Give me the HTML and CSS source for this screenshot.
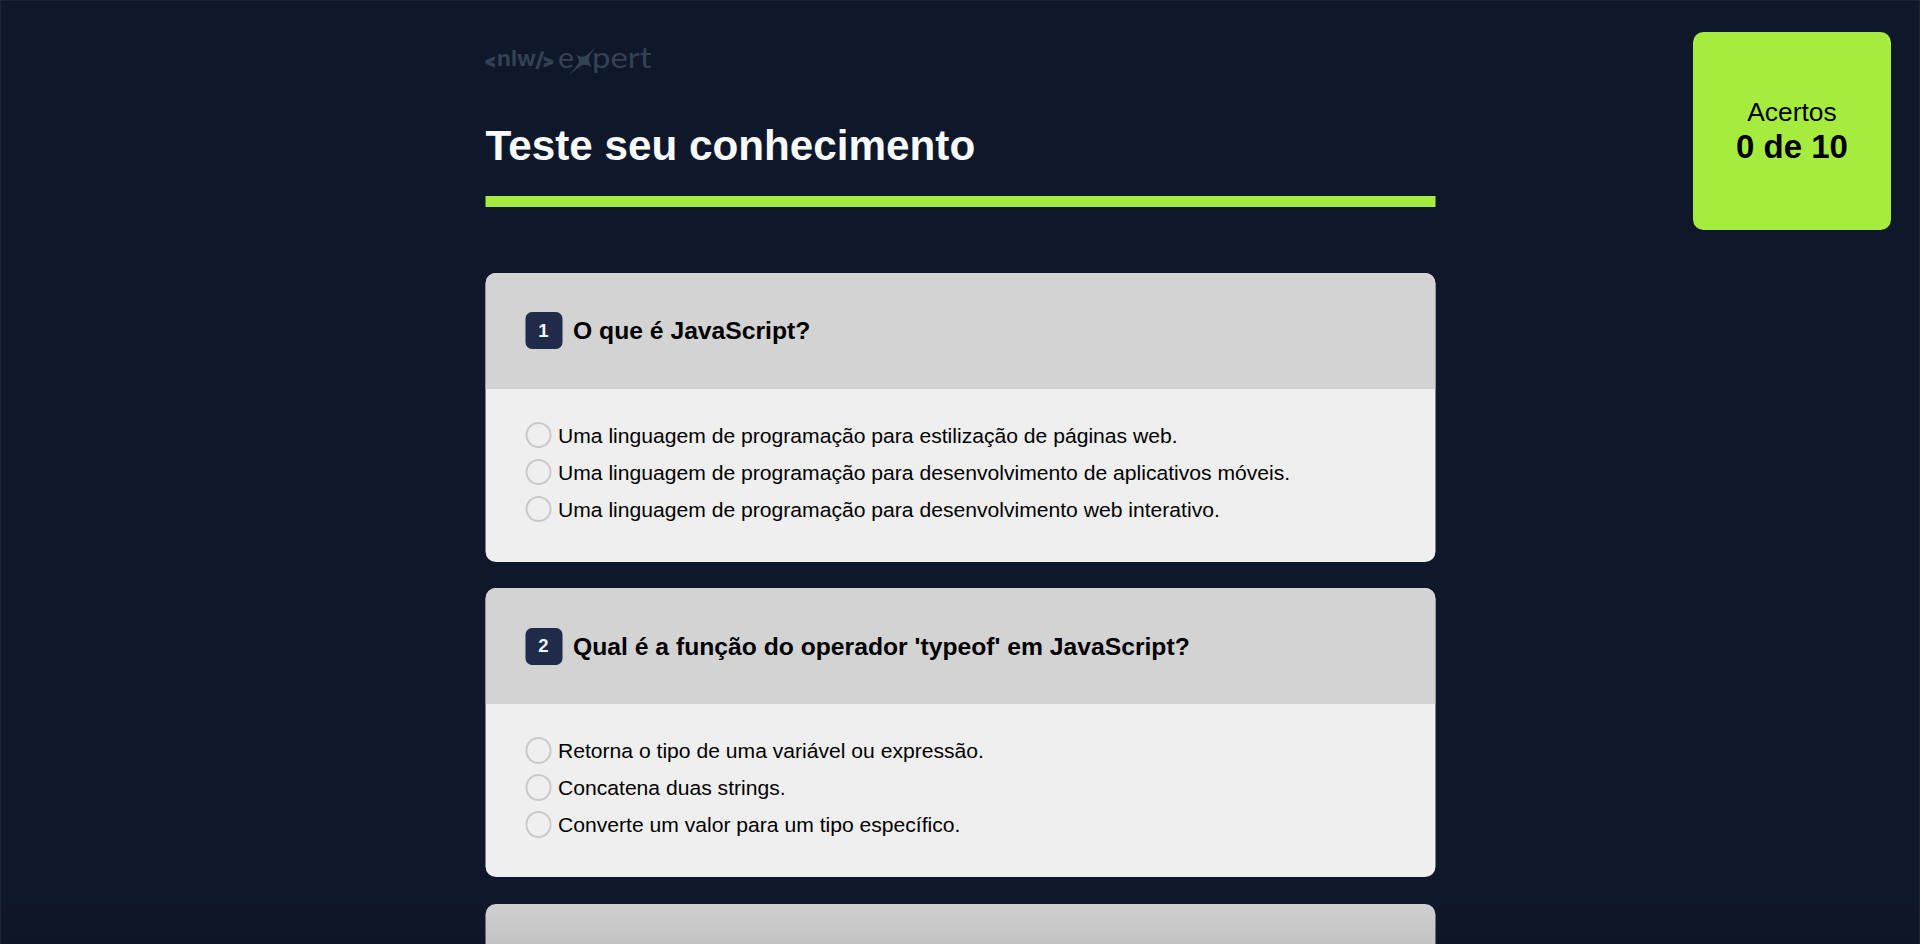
FILE: index.html
```
<!DOCTYPE html>
<html lang="pt-BR">
<head>
<meta charset="UTF-8">
<title>Teste seu conhecimento</title>
<link rel="stylesheet" href="styles.css">
</head>
<body>
<main class="quiz">
  <svg class="logo" viewBox="0 0 168 36" role="img" aria-label="nlw expert">
    <g class="logo-bold">
      <text class="logo-sign" x="-1" y="23.500" font-size="17" textLength="11.500" lengthAdjust="spacingAndGlyphs">&lt;</text>
      <text x="11.500" y="23" font-size="21" textLength="39" lengthAdjust="spacingAndGlyphs">nlw</text>
      <text x="49.500" y="23.500" font-size="20" textLength="9.500" lengthAdjust="spacingAndGlyphs">/</text>
      <text class="logo-sign" x="57" y="23.500" font-size="17" textLength="11.500" lengthAdjust="spacingAndGlyphs">&gt;</text>
    </g>
    <g class="logo-light">
      <text x="72.500" y="24.500" font-size="29" textLength="16" lengthAdjust="spacingAndGlyphs">e</text>
      <text x="106.500" y="24.500" font-size="29" textLength="59.500" lengthAdjust="spacingAndGlyphs">pert</text>
    </g>
    <path class="logo-star" d="M113 0.800 C107.500 7 104.500 11.500 103.300 15.500 C103.300 18.500 104.500 21 106 23.800 C103 22 100 21.300 97.500 21.800 C93 24 88.500 28 83 33 C88 27 92 22.500 93.500 18.800 C93.500 16.500 92.500 14 90.300 11.300 C93 13 96 14 98.800 13.500 C103.500 11 108 6.500 113 0.800 Z"/>
  </svg>
  <h1 class="title">Teste seu conhecimento</h1>
  <div class="rule"></div>
  <div class="cards">
    <section class="card">
      <header class="card-head"><span class="num">1</span><h2 class="question">O que é JavaScript?</h2></header>
      <div class="options">
        <label class="option"><span class="radio"></span><span class="answer">Uma linguagem de programação para estilização de páginas web.</span></label>
        <label class="option"><span class="radio"></span><span class="answer">Uma linguagem de programação para desenvolvimento de aplicativos móveis.</span></label>
        <label class="option"><span class="radio"></span><span class="answer">Uma linguagem de programação para desenvolvimento web interativo.</span></label>
      </div>
    </section>
    <section class="card">
      <header class="card-head"><span class="num">2</span><h2 class="question">Qual é a função do operador 'typeof' em JavaScript?</h2></header>
      <div class="options">
        <label class="option"><span class="radio"></span><span class="answer">Retorna o tipo de uma variável ou expressão.</span></label>
        <label class="option"><span class="radio"></span><span class="answer">Concatena duas strings.</span></label>
        <label class="option"><span class="radio"></span><span class="answer">Converte um valor para um tipo específico.</span></label>
      </div>
    </section>
    <section class="card card-cut"></section>
  </div>
</main>
<aside class="score">
  <span class="score-label">Acertos</span>
  <strong class="score-value">0 de 10</strong>
</aside>
<div class="shade"></div>
</body>
</html>
```
FILE: styles.css
```
* { box-sizing: border-box; }
html { height: 100%; overflow: hidden; }
body {
  margin: 0;
  height: 944px;
  overflow: hidden;
  background: #0f172a;
  border: 1px solid #1b2537;
  border-bottom: 0;
  font-family: "Liberation Sans", Arial, sans-serif;
  color: #000;
}
.quiz {
  display: flex;
  flex-direction: column;
  width: 950px;
  height: 943px;
  margin: 0 auto;
  padding-top: 42px;
  transform: translateX(0.5px);
}
.logo { display: block; flex: none; width: 168px; height: 36px; overflow: visible; fill: #334155; }
.logo-bold { font-family: Inter, sans-serif; font-weight: 700; }
.logo-sign { font-weight: 900; stroke: #334155; stroke-width: 0.6px; }
.logo-light { font-family: Lato, sans-serif; font-weight: 400; }
.title {
  margin: 42px 0 0;
  font-size: 42.24px;
  line-height: 49px;
  color: #f8fafc;
  white-space: nowrap;
}
.rule { flex: none; height: 10.5px; margin-top: 26px; background: #a6ec3f; }
.cards { display: flex; flex: 1; flex-direction: column; gap: 26.5px; min-height: 0; margin-top: 66px; }
.card { flex: none; border-radius: 10.5px; overflow: hidden; background: #efefef; }
.card-cut { flex: 1; border-radius: 10.5px 10.5px 0 0; background: #d3d3d3; }
.card-head {
  display: flex;
  align-items: center;
  gap: 11px;
  height: 116px;
  padding: 0 39.5px;
  background: #d3d3d3;
}
.num {
  display: flex;
  align-items: center;
  justify-content: center;
  width: 37px;
  height: 37px;
  border-radius: 6.5px;
  background: #202b49;
  color: #f1f5f9;
  font-size: 18.5px;
  font-weight: 700;
}
.question { margin: 0; padding-top: 1px; font-size: 24.7px; line-height: 30px; white-space: nowrap; }
.options { height: 173px; padding: 28px 39.5px 0; }
.option {
  display: flex;
  align-items: center;
  gap: 6.5px;
  height: 37px;
  font-size: 21.12px;
  white-space: nowrap;
}
.answer { padding-top: 1.5px; }
.radio { width: 26.5px; height: 26.5px; border: 2px solid #cacaca; border-radius: 50%; }
.score {
  position: absolute;
  top: 31.5px;
  right: 29px;
  display: flex;
  flex-direction: column;
  align-items: center;
  justify-content: center;
  width: 198px;
  height: 198px;
  padding-top: 2px;
  border-radius: 10.5px;
  background: #a6ec3f;
}
.score-label { font-size: 26.4px; line-height: 30px; }
.score-value { font-size: 33px; line-height: 40px; margin-bottom: -1px; }
.shade {
  position: absolute;
  left: 0;
  right: 0;
  bottom: 0;
  height: 50px;
  background: linear-gradient(rgba(0, 0, 0, 0), rgba(0, 0, 0, 0.08));
}
```
